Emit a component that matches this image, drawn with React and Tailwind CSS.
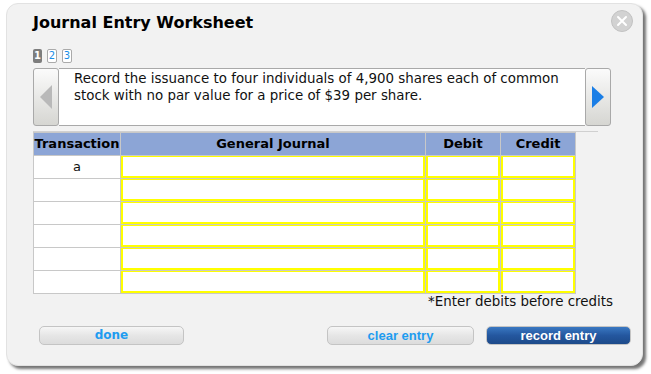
import React from 'react';

const rows = ['a', '', '', '', '', ''];

function ArrowButton({ dir }) {
  return (
    <button className="w-[26px] h-full flex items-center justify-center bg-gradient-to-b from-[#fbfbfb] to-[#d6d6d2] border border-[#a9a9a9] rounded-[3px]">
      {dir === 'left' ? (
        <svg width="12" height="24" viewBox="0 0 12 24">
          <polygon points="12,0 12,24 0,12" fill="#b9b9b9" />
        </svg>
      ) : (
        <svg width="12" height="22" viewBox="0 0 12 22">
          <polygon points="0,0 0,22 12,11" fill="#1a7ee6" />
        </svg>
      )}
    </button>
  );
}

export default function App() {
  const font = { fontFamily: '"DejaVu Sans", Verdana, sans-serif' };
  return (
    <div className="w-[651px] h-[374px] bg-white overflow-hidden" style={font}>
      <div className="ml-[6px] mt-[3px] w-[637px] h-[363px] rounded-[12px] bg-[#f2f2f2] border border-[#e2e2e2] shadow-[3px_3px_3px_rgba(0,0,0,0.55)] flex flex-col pl-[26px] relative">
        {/* close */}
        <div className="absolute right-[9px] top-[6px] w-[22px] h-[22px] rounded-full bg-[#d2d2d2] border border-[#c2c2c2] flex items-center justify-center">
          <svg width="12" height="12" viewBox="0 0 12 12">
            <path d="M2 2 L10 10 M10 2 L2 10" stroke="#fff" strokeWidth="2" strokeLinecap="round" />
          </svg>
        </div>

        <h1 className="mt-[8px] text-[16px] leading-[22px] font-bold text-black">Journal Entry Worksheet</h1>

        {/* tabs */}
        <div className="flex gap-[5px] mt-[15px] h-[14px]">
          <span className="w-[9px] h-[14px] rounded-[2px] bg-[#7d7d7d] text-white text-[10px] leading-[14px] text-center font-bold">1</span>
          <span className="w-[10px] h-[14px] rounded-[2px] bg-white border border-[#aaa] text-[#1a8ee6] text-[10px] leading-[12px] text-center">2</span>
          <span className="w-[10px] h-[14px] rounded-[2px] bg-white border border-[#aaa] text-[#1a8ee6] text-[10px] leading-[12px] text-center">3</span>
        </div>

        {/* scenario */}
        <div className="mt-[5px] w-[578px] h-[58px] flex">
          <ArrowButton dir="left" />
          <div className="flex-1 bg-white border-y border-[#a9a9a9] pl-[15px] pt-[1px] text-[13.4px] leading-[17px] text-[#111]">
            Record the issuance to four individuals of 4,900 shares each of common stock with no par value for a price of $39 per share.
          </div>
          <ArrowButton dir="right" />
        </div>

        <div className="mt-[5px] w-[565px] border-b border-[#d0d0d0]" />

        {/* table */}
        <table className="w-[543px] border-collapse text-[13px]">
          <thead>
            <tr className="bg-[#8ca5d6] h-[23px]">
              <th className="w-[87px] border border-[#c8c8c8] font-bold text-black px-0">Transaction</th>
              <th className="w-[305px] border border-[#c8c8c8] font-bold text-black">General Journal</th>
              <th className="w-[75px] border border-[#c8c8c8] font-bold text-black">Debit</th>
              <th className="w-[75px] border border-[#c8c8c8] font-bold text-black">Credit</th>
            </tr>
          </thead>
          <tbody>
            {rows.map((r, i) => (
              <tr key={i} className="h-[23px]">
                <td className="border border-[#c8c8c8] bg-white text-center text-[#111]">{r}</td>
                <td className="border border-[#c8c8c8] p-0"><div className="h-[22px] bg-white border-2 border-t border-[#ffff00]" /></td>
                <td className="border border-[#c8c8c8] p-0"><div className="h-[22px] bg-white border-2 border-t border-[#ffff00]" /></td>
                <td className="border border-[#c8c8c8] p-0"><div className="h-[22px] bg-white border-2 border-t border-[#ffff00]" /></td>
              </tr>
            ))}
          </tbody>
        </table>

        <div className="w-[580px] text-right text-[13.4px] leading-[16px] text-[#111]">*Enter debits before credits</div>

        {/* buttons */}
        <div className="mt-[16px] flex items-center w-[598px] pl-[6px]" style={{ fontFamily: '"Liberation Sans", Arial, sans-serif' }}>
          <button className="w-[145px] h-[19px] rounded-[5px] border border-[#c4c4c4] bg-gradient-to-b from-[#f6f6f6] via-[#e6e6e6] to-[#dcdcdc] text-[#1e9cf0] text-[12px] font-bold leading-[17px]" style={font}>done</button>
          <button className="ml-auto w-[147px] h-[19px] rounded-[5px] border border-[#c4c4c4] bg-gradient-to-b from-[#f6f6f6] via-[#e6e6e6] to-[#dcdcdc] text-[#1e9cf0] text-[13px] font-bold leading-[17px]">clear entry</button>
          <button className="ml-[12px] w-[145px] h-[19px] rounded-[5px] border border-[#c4c4c4] bg-gradient-to-b from-[#3a78c2] via-[#24579f] to-[#1d4a8a] text-white text-[13px] font-bold leading-[17px]">record entry</button>
        </div>
      </div>
    </div>
  );
}
